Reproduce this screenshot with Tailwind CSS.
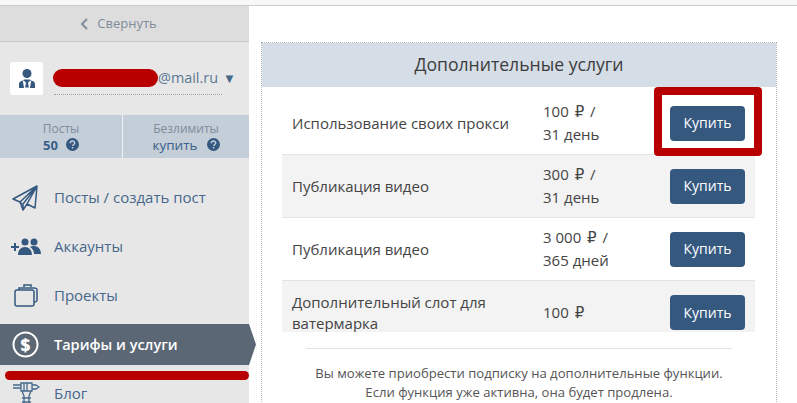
<!DOCTYPE html>
<html lang="ru"><head><meta charset="utf-8"><script src="https://cdn.jsdelivr.net/npm/@tailwindcss/browser@4"></script></head>
<body class="w-[797px] h-[403px] overflow-hidden bg-white font-['Open_Sans',sans-serif] relative">
<div class="h-[6px] bg-[#f6f8fa] border-b border-[#cccccc]"></div>
<div class="flex h-[397px] overflow-hidden">
  <aside class="w-[249px] shrink-0 bg-[#e7e7e7] relative">
    <div class="h-[36px] pt-[1px] pr-[12px] bg-[#dddddd] border-b border-[#c9c9c9] flex items-center justify-center gap-[9px] text-[13px] text-[#7f8c9a]">
      <svg width="8" height="12" viewBox="0 0 8 12" fill="none" stroke="#7f8c9a" stroke-width="2"><path d="M7 1 2 6l5 5"/></svg>
      <span>Свернуть</span>
    </div>
    <div class="h-[73px] flex items-center pl-[10px] pb-[1px]">
      <div class="w-[33px] h-[33px] bg-white rounded-[2px] flex items-center justify-center">
        <svg width="18" height="21" viewBox="0 0 18 21" fill="#34587f"><circle cx="9" cy="5.500" r="4.500"/><path d="M6 11.500h6l1 1-2 1-1 1.500 1 4.500h-4l1-4.500-1-1.500-2-1zM1 20v-4c0-2 1.500-3 3.800-3.500L6 20zM17 20v-4c0-2-1.500-3-3.800-3.500L12 20z"/></svg>
      </div>
      <div class="ml-[11px] w-[168px] h-[33px] border-b border-dotted border-[#9aa5b1] flex items-start pt-[7px]">
        <span class="w-[105px] h-[18px] -ml-[1px] shrink-0 bg-[#b90000] rounded-full"></span>
        <span class="text-[14.400px] leading-[18px] text-[#5b7896]">@mail.ru</span>
        <span class="ml-[5px] text-[13px] leading-[18px] text-[#46688c] shrink-0">▼</span>
      </div>
    </div>
    <div class="h-[43px] bg-[#c3ced9] flex text-center text-[12px] leading-[16px]">
      <div class="w-[123px] border-r border-[#eef1f4] flex flex-col justify-center text-[#7f8c9a]">
        <div>Посты</div>
        <div class="flex items-center justify-center gap-[8px] font-bold text-[#3a5f88] text-[13px]">50
          <svg width="13" height="13" viewBox="0 0 13 13"><circle cx="6.500" cy="6.500" r="6.500" fill="#34587f"/><path d="M4.300 5.200c0-2.800 4.400-2.800 4.400-.2 0 1.500-2 1.500-2 3" fill="none" stroke="#c3ced9" stroke-width="1.500"/><rect x="5.800" y="9" width="1.500" height="1.500" fill="#c3ced9"/></svg>
        </div>
      </div>
      <div class="flex-1 flex flex-col justify-center text-[#7f8c9a]">
        <div>Безлимиты</div>
        <div class="flex items-center justify-center gap-[9px] text-[#3a5f88] text-[13.500px]">купить
          <svg width="13" height="13" viewBox="0 0 13 13"><circle cx="6.500" cy="6.500" r="6.500" fill="#34587f"/><path d="M4.300 5.200c0-2.800 4.400-2.800 4.400-.2 0 1.500-2 1.500-2 3" fill="none" stroke="#c3ced9" stroke-width="1.500"/><rect x="5.800" y="9" width="1.500" height="1.500" fill="#c3ced9"/></svg>
        </div>
      </div>
    </div>
    <nav class="pt-[19px] flex flex-col gap-[8px] text-[15px] text-[#46688c]">
      <a class="h-[41px] flex items-center">
        <span class="w-[54px] shrink-0 flex justify-center">
          <svg class="-ml-[4px]" width="26" height="26" viewBox="0 0 26 26" fill="none" stroke="#34587f" stroke-width="1.500" stroke-linejoin="round"><path d="M25 1 1 14l7 3 3 8 4-6 8 4zM25 1 8 17l2 2M25 1 15 19l-4 6 0-6z"/></svg>
        </span>Посты / создать пост
      </a>
      <a class="h-[41px] flex items-center">
        <span class="w-[54px] shrink-0 flex justify-center">
          <svg class="-ml-[2px]" width="30" height="17" viewBox="0 0 30 17" fill="#34587f"><path d="M0 8h3V5h2v3h3v2H5v3H3v-3H0z"/><circle cx="14" cy="4" r="3.500"/><circle cx="23" cy="4" r="3.500"/><path d="M7 17c0-5 3-8 7-8s7 3 7 8zM19 9c1-1 3-1 4-1 4 0 7 3 7 8h-7c0-3-1-5-4-7z"/></svg>
        </span>Аккаунты
      </a>
      <a class="h-[41px] flex items-center">
        <span class="w-[54px] shrink-0 flex justify-center">
          <svg class="-ml-[1px]" width="25" height="23" viewBox="0 0 25 23" fill="none" stroke="#34587f" stroke-width="1.500"><rect x="1" y="6" width="19" height="16" rx="2"/><path d="M5 6V4h15c2 0 3 0 3 2v10c0 2-1 2-3 2M10 3V1h7v2" /></svg>
        </span>Проекты
      </a>
      <a class="h-[41px] w-[256px] flex items-center bg-[#5b6775] text-white text-[14.500px] font-semibold [clip-path:polygon(0_0,249px_0,256px_50%,249px_100%,0_100%)]">
        <span class="w-[54px] shrink-0 flex justify-center">
          <svg class="-ml-[3px]" width="27" height="27" viewBox="0 0 27 27"><circle cx="13.500" cy="13.500" r="12" fill="none" stroke="#fff" stroke-width="2"/><text x="13.500" y="19.500" text-anchor="middle" fill="#fff" font-size="17" font-weight="800" font-family="Open Sans">$</text></svg>
        </span>Тарифы и услуги
      </a>
      <a class="h-[41px] flex items-center">
        <span class="w-[54px] shrink-0 flex justify-center">
          <svg class="-ml-[3px]" width="28" height="30" viewBox="0 0 28 30" fill="none" stroke="#46688c" stroke-width="1.300"><path d="M1 6h8M1 9h8M9 4h11v8H9zM12 4v8M15 4v8M20 6h4l3 2-3 2h-4M10 12l2 5v13M19 12l-2 5v13M10 19h9M10 23h9"/></svg>
        </span>Блог
      </a>
    </nav>
    <div class="absolute left-[5px] top-[365px] w-[244px] h-[9px] rounded-full bg-[#b90000]"></div>
  </aside>
  <main class="flex-1 pl-[12px] pr-[20px] pt-[36px]">
    <section class="border border-dotted border-[#b5b5b5] border-b-0 h-[400px]">
      <h2 class="h-[44px] pb-[1px] bg-[#d5dde6] flex items-center justify-center text-[17.600px] font-normal text-[#3c3c3c]">Дополнительные услуги</h2>
      <div class="mx-[20px] w-[473px] h-[245px] overflow-hidden text-[15px] leading-[22px] text-[#444444]">
        <div class="h-[68px] pt-[5px] flex items-center border-b border-[#e3e3e3]">
          <div class="w-[251px] pl-[10px] shrink-0">Использование своих прокси</div><div class="w-[137px] shrink-0 pl-[10px] leading-[21.500px]">100 <span class="font-['DejaVu_Sans'] mx-[2px]">₽</span> /<br>31 день</div>
          <button class="w-[75px] h-[35px] rounded-[4px] bg-[#35587f] text-white text-[14px]">Купить</button>
        </div>
        <div class="h-[63px] flex items-center bg-[#f3f3f3] border-b border-[#e3e3e3]">
          <div class="w-[251px] pl-[10px] shrink-0">Публикация видео</div><div class="w-[137px] shrink-0 pl-[10px] leading-[21.500px]">300 <span class="font-['DejaVu_Sans'] mx-[2px]">₽</span> /<br>31 день</div>
          <button class="w-[75px] h-[35px] rounded-[4px] bg-[#35587f] text-white text-[14px]">Купить</button>
        </div>
        <div class="h-[63px] flex items-center border-b border-[#e3e3e3]">
          <div class="w-[251px] pl-[10px] shrink-0">Публикация видео</div><div class="w-[137px] shrink-0 pl-[10px] leading-[21.500px]">3 000 <span class="font-['DejaVu_Sans'] mx-[2px]">₽</span> /<br>365 дней</div>
          <button class="w-[75px] h-[35px] rounded-[4px] bg-[#35587f] text-white text-[14px]">Купить</button>
        </div>
        <div class="h-[63px] flex items-center bg-[#f3f3f3]">
          <div class="w-[251px] pl-[10px] shrink-0 leading-[21px]">Дополнительный слот для ватермарка</div><div class="w-[137px] shrink-0 pl-[10px]">100 <span class="font-['DejaVu_Sans'] mx-[2px]">₽</span></div>
          <button class="w-[75px] h-[35px] rounded-[4px] bg-[#35587f] text-white text-[14px]">Купить</button>
        </div>
      </div>
      <div class="mt-[16px] mx-[44px] border-t border-[#e3e3e3] pt-[15px] text-center text-[13.100px] leading-[19px] text-[#555555] whitespace-nowrap">
        Вы можете приобрести подписку на дополнительные функции.<br>Если функция уже активна, она будет продлена.
      </div>
    </section>
  </main>
</div>
<div class="absolute left-[654px] top-[87px] w-[108px] h-[69px] border-[8px] border-[#b90000] rounded-[4px]"></div>
</body></html>
